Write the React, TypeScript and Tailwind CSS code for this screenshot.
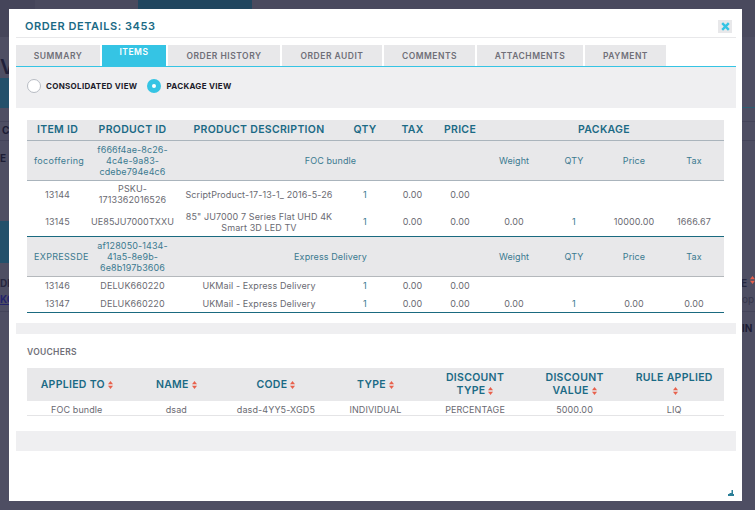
const packageRows = [
  {
    group: { id: "focoffering", product: "f666f4ae-8c26-4c4e-9a83-cdebe794e4c6", name: "FOC bundle" },
    items: [
      { id: "13144", product: "PSKU-1713362016526", desc: "ScriptProduct-17-13-1_ 2016-5-26", qty: "1", tax: "0.00", price: "0.00", pkg: null, height: "h-[28px]" },
      { id: "13145", product: "UE85JU7000TXXU", desc: '85" JU7000 7 Series Flat UHD 4K Smart 3D LED TV', qty: "1", tax: "0.00", price: "0.00", pkg: ["0.00", "1", "10000.00", "1666.67"], height: "h-[28px]" },
    ],
    border: "border-[#aab4bc]",
  },
  {
    group: { id: "EXPRESSDE", product: "af128050-1434-41a5-8e9b-6e8b197b3606", name: "Express Delivery" },
    items: [
      { id: "13146", product: "DELUK660220", desc: "UKMail - Express Delivery", qty: "1", tax: "0.00", price: "0.00", pkg: null, height: "h-[19px]" },
      { id: "13147", product: "DELUK660220", desc: "UKMail - Express Delivery", qty: "1", tax: "0.00", price: "0.00", pkg: ["0.00", "1", "0.00", "0.00"], height: "h-[17px]" },
    ],
    border: "border-[#b4b8bc]",
  },
];

const tabs = [
  { label: "SUMMARY", width: "w-[84px]" },
  { label: "ITEMS", width: "w-[64px]", active: true },
  { label: "ORDER HISTORY", width: "w-[112px]" },
  { label: "ORDER AUDIT", width: "w-[100px]" },
  { label: "COMMENTS", width: "w-[91px]" },
  { label: "ATTACHMENTS", width: "w-[106px]" },
  { label: "PAYMENT", width: "w-[81px]" },
];

const voucherColumns = ["APPLIED TO", "NAME", "CODE", "TYPE", "DISCOUNT TYPE", "DISCOUNT VALUE", "RULE APPLIED"];

const voucherRow = ["FOC bundle", "dsad", "dasd-4YY5-XGD5", "INDIVIDUAL", "PERCENTAGE", "5000.00", "LIQ"];

function SortIcon() {
  return (
    <svg width="5" height="8" viewBox="0 0 5 8" className="inline-block ml-[3px] align-[-1px]">
      <path d="M2.5 0L5 3.2H0Z" fill="#e8604c" />
      <path d="M2.5 8L0 4.8H5Z" fill="#e8604c" />
    </svg>
  );
}

function Radio({ label, checked }: { label: string; checked?: boolean }) {
  return (
    <div className="flex items-center gap-[5px]">
      {checked ? (
        <span className="flex items-center justify-center w-[14px] h-[14px] rounded-full bg-[#35c4e4]">
          <span className="w-[4px] h-[4px] rounded-full bg-white" />
        </span>
      ) : (
        <span className="w-[14px] h-[14px] rounded-full bg-white border border-[#b8bcc4]" />
      )}
      <span className="text-[8px] font-bold tracking-[0.3px] text-[#1b1b2a]">{label}</span>
    </div>
  );
}

function Backdrop() {
  return (
    <div className="flex flex-col h-[510px] bg-[#4e4e63] text-[#1d1d35] font-bold text-[10px]">
      <div className="flex h-[37px] bg-[#4a4a5e] items-start">
        <div className="w-[35px] h-[37px] bg-[#45455a]" />
        <div className="w-[103px]" />
        <div className="w-[114px] h-[9px] bg-[#21465f]" />
      </div>
      <div className="h-[19px]" />
      <div className="h-[22px] text-[20px] leading-[22px] font-semibold text-[#20203a]">V</div>
      <div className="h-[30px] border-b border-[#2c5f73]">
        <div className="w-[9px] h-[30px] bg-[#23506b]" />
      </div>
      <div className="h-[14px] border-b border-[#44445a]" />
      <div className="h-[19px] pl-[2px] leading-[16px] border-b border-[#44445a]">C</div>
      <div className="h-[11px]" />
      <div className="h-[13px] leading-[13px]">E</div>
      <div className="h-[56px]" />
      <div className="h-[42px] w-[9px] bg-[#23506b]" />
      <div className="h-[13px]" />
      <div className="flex h-[14px] leading-[14px] text-[#26263f]">
        <span className="w-[742px]">DE</span>
        <span>IE</span>
        <SortIcon />
      </div>
      <div className="flex h-[22px] leading-[18px] border-b border-[#44445a]">
        <span className="w-[742px] underline text-[#23236a]">KC</span>
        <span className="font-normal text-[#37374d]">op</span>
      </div>
      <div className="flex h-[28px] pt-[9px] pl-[742px]">
        <span>IN</span>
      </div>
    </div>
  );
}

export default function App() {
  return (
    <div className="relative w-[755px] h-[510px] overflow-hidden font-['Inter',sans-serif]">
      <Backdrop />

      <div className="absolute left-[9px] top-[9px] w-[733px] h-[492px] bg-white pl-[7px] pr-[6px] flex flex-col">
        {/* Header */}
        <div className="flex items-center justify-between h-[29px] pt-[6px] pl-[9px] pr-[4px] border-b border-[#e8e8ea]">
          <h1 className="text-[11px] font-semibold tracking-[0.55px] text-[#1b6a85]">ORDER DETAILS: 3453</h1>
          <button className="flex items-center justify-center w-[14px] h-[13px] bg-[#e8e8ea]">
            <svg width="9" height="9" viewBox="0 0 9 9">
              <path d="M1.2 1.2L7.8 7.8M7.8 1.2L1.2 7.8" stroke="#35c4e4" strokeWidth="2.4" />
            </svg>
          </button>
        </div>

        {/* Tabs */}
        <div className="flex gap-[2px] mt-[7px] h-[21px] border-b-2 border-[#35c4e4] box-content -mb-[1px]">
          {tabs.map((tab) => (
            <div
              key={tab.label}
              className={`${tab.width} h-[21px] flex justify-center text-[8.5px] font-semibold tracking-[0.5px] ${
                tab.active ? "bg-[#35c4e4] text-white items-start pt-[1px]" : "bg-[#e8e8ea] text-[#6f6f78] items-center pt-[1px]"
              }`}
            >
              {tab.label}
            </div>
          ))}
        </div>

        {/* View switch */}
        <div className="flex items-center gap-[10px] h-[41px] pl-[11px] pb-[3px] bg-[#efeff1]">
          <Radio label="CONSOLIDATED VIEW" />
          <Radio label="PACKAGE VIEW" checked />
        </div>

        {/* Items table */}
        <div className="mt-[12px] pl-[11px]">
          <table className="w-[697px] table-fixed border-collapse text-[9px] tracking-[0.1px] text-[#6a6a72] text-center">
            <colgroup>
              <col className="w-[61px]" />
              <col className="w-[89px]" />
              <col className="w-[164px]" />
              <col className="w-[48px]" />
              <col className="w-[47px]" />
              <col className="w-[48px]" />
              <col className="w-[60px]" />
              <col className="w-[60px]" />
              <col className="w-[60px]" />
              <col className="w-[60px]" />
            </colgroup>
            <thead>
              <tr className="h-[20px] bg-[#e8e8ea] border-b border-[#aab4bc] text-[10.5px] tracking-[0.3px] text-[#1b6a85]">
                <th className="font-semibold">ITEM ID</th>
                <th className="font-semibold">PRODUCT ID</th>
                <th className="font-semibold">PRODUCT DESCRIPTION</th>
                <th className="font-semibold">QTY</th>
                <th className="font-semibold">TAX</th>
                <th className="font-semibold">PRICE</th>
                <th colSpan={4} className="font-semibold">PACKAGE</th>
              </tr>
            </thead>
            {packageRows.map((section) => (
              <tbody key={section.group.id} className="border-b border-[#1a6a80]">
                <tr className={`h-[40px] bg-[#e8e8ea] border-b ${section.border} text-[#3b7a90] leading-[11px]`}>
                  <td className="pl-[7px] text-left whitespace-nowrap tracking-[0.3px]">{section.group.id}</td>
                  <td className="px-[4px] break-words">{section.group.product}</td>
                  <td colSpan={4}>{section.group.name}</td>
                  <td>Weight</td>
                  <td>QTY</td>
                  <td>Price</td>
                  <td>Tax</td>
                </tr>
                {section.items.map((item) => (
                  <tr key={item.id} className={`${item.height} leading-[11px]`}>
                    <td>{item.id}</td>
                    <td className="break-words">{item.product}</td>
                    <td className="px-[2px]">{item.desc}</td>
                    <td className="text-[#3b7a90]">{item.qty}</td>
                    <td>{item.tax}</td>
                    <td>{item.price}</td>
                    {(item.pkg ?? ["", "", "", ""]).map((value, i) => (
                      <td key={i} className={i === 1 ? "text-[#3b7a90]" : ""}>
                        {value}
                      </td>
                    ))}
                  </tr>
                ))}
              </tbody>
            ))}
          </table>
        </div>

        <div className="mt-[10px] h-[11px] bg-[#efeff1]" />

        {/* Vouchers */}
        <h2 className="mt-[13px] ml-[11px] text-[8.5px] leading-[10px] font-semibold tracking-[0.3px] text-[#6f6f78]">VOUCHERS</h2>
        <div className="mt-[11px] pl-[11px]">
          <table className="w-[697px] table-fixed border-collapse text-center">
            <thead>
              <tr className="h-[33px] bg-[#e8e8ea] text-[10.5px] tracking-[0.3px] leading-[13px] text-[#1b6a85]">
                {voucherColumns.map((col) => (
                  <th key={col} className="font-semibold px-[10px]">
                    {col}
                    <SortIcon />
                  </th>
                ))}
              </tr>
            </thead>
            <tbody>
              <tr className="h-[14px] border-b border-[#e4e4e6] text-[9px] leading-[11px] tracking-[0.1px] text-[#6a6a72]">
                {voucherRow.map((value) => (
                  <td key={value} className="pt-[3px]">
                    {value}
                  </td>
                ))}
              </tr>
            </tbody>
          </table>
        </div>

        <div className="mt-[15px] h-[20px] bg-[#efeff1]" />

        {/* Resize handle */}
        <svg width="6" height="6" viewBox="0 0 6 6" className="absolute right-[8px] bottom-[5px]">
          <path d="M3.5 0H5V4H6V6H0V4H1.5V3H3.5Z" fill="#2b7f98" />
        </svg>
      </div>
    </div>
  );
}
